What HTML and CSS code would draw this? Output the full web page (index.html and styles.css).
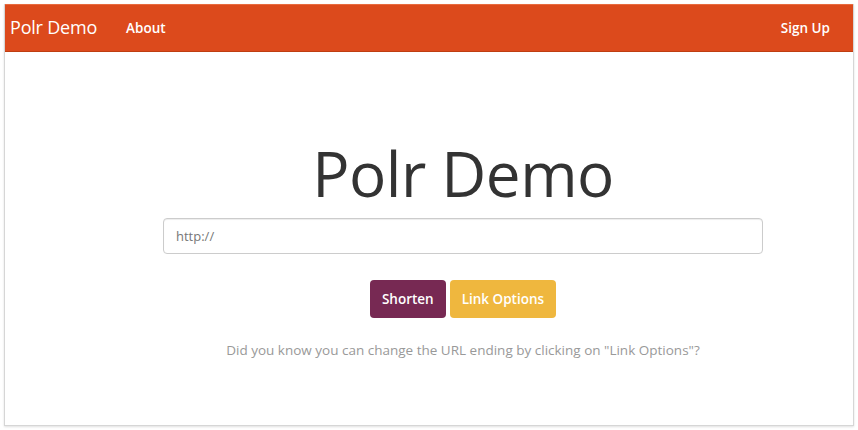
FILE: index.html
```html
<!DOCTYPE html>
<html lang="en">
<head>
  <meta charset="UTF-8">
  <title>Polr Demo</title>
  <link rel="stylesheet" href="styles.css">
</head>
<body>
<div class="frame">
  <nav class="navbar">
    <a class="brand" href="#">Polr Demo</a>
    <ul class="nav-links">
      <li><a href="#">About</a></li>
    </ul>
    <ul class="nav-links nav-right">
      <li><a href="#">Sign Up</a></li>
    </ul>
  </nav>

  <div class="content">
    <h1 class="title">Polr Demo</h1>
    <form class="shorten-form">
      <input type="text" class="url-input" placeholder="http://">
      <div class="button-group">
        <button type="button" class="btn btn-shorten">Shorten</button>
        <button type="button" class="btn btn-options">Link Options</button>
      </div>
    </form>
    <p class="tip">Did you know you can change the URL ending by clicking on "Link Options"?</p>
  </div>
</div>
</body>
</html>
```

FILE: styles.css
```css
:root {
  --orange: #dc4a1c;
  --orange-dark: #bf3e11;
  --aubergine: #772953;
  --yellow: #efb73e;
  --gray-border: #cccccc;
  --text: #333333;
  --muted: #999999;
}

* {
  margin: 0;
  padding: 0;
  box-sizing: border-box;
}

body {
  font-family: 'Open Sans', 'Noto Sans', sans-serif;
  background: #ffffff;
  color: var(--text);
  width: 858px;
  height: 430px;
  overflow: hidden;
}

.frame {
  margin: 4px 4px 0 4px;
  height: 422px;
  border: 1px solid #d6d6d6;
  border-top: none;
  box-shadow: 0 1px 2px rgba(0, 0, 0, 0.12);
}

.navbar {
  display: flex;
  align-items: center;
  height: 48px;
  background: var(--orange);
  border-top: 1px solid #e86a3e;
  border-bottom: 1px solid var(--orange-dark);
}

.brand {
  color: #ffffff;
  text-decoration: none;
  font-size: 18px;
  padding: 0 23px 0 5px;
  margin-top: -2px;
  letter-spacing: -0.2px;
}

.nav-links {
  list-style: none;
  display: flex;
  margin-top: -2px;
}

.nav-links a {
  color: #ffffff;
  text-decoration: none;
  font-size: 13.5px;
  font-weight: 600;
  padding: 0 6px;
}

.nav-right {
  margin-left: auto;
  padding-right: 17px;
}

.content {
  padding: 90px 0 0 68px;
  display: flex;
  flex-direction: column;
  align-items: center;
}

.title {
  font-size: 62px;
  font-weight: 400;
  line-height: 1;
  letter-spacing: -0.5px;
  color: #333333;
}

.shorten-form {
  display: flex;
  flex-direction: column;
  align-items: center;
  margin-top: 14px;
}

.url-input {
  width: 600px;
  height: 36px;
  padding: 6px 12px;
  border: 1px solid var(--gray-border);
  border-radius: 4px;
  font-family: inherit;
  font-size: 13px;
  color: var(--text);
  box-shadow: inset 0 1px 1px rgba(0, 0, 0, 0.075);
}

.url-input::placeholder {
  color: #777777;
}

.button-group {
  display: flex;
  gap: 4px;
  margin-top: 26px;
}

.btn {
  height: 38px;
  padding: 0 12px;
  border: none;
  border-radius: 4px;
  color: #ffffff;
  font-family: inherit;
  font-size: 13.5px;
  font-weight: 600;
  cursor: pointer;
}

.btn-shorten {
  background: var(--aubergine);
}

.btn-options {
  background: var(--yellow);
}

.tip {
  margin-top: 23px;
  font-size: 13.5px;
  color: var(--muted);
}
```
